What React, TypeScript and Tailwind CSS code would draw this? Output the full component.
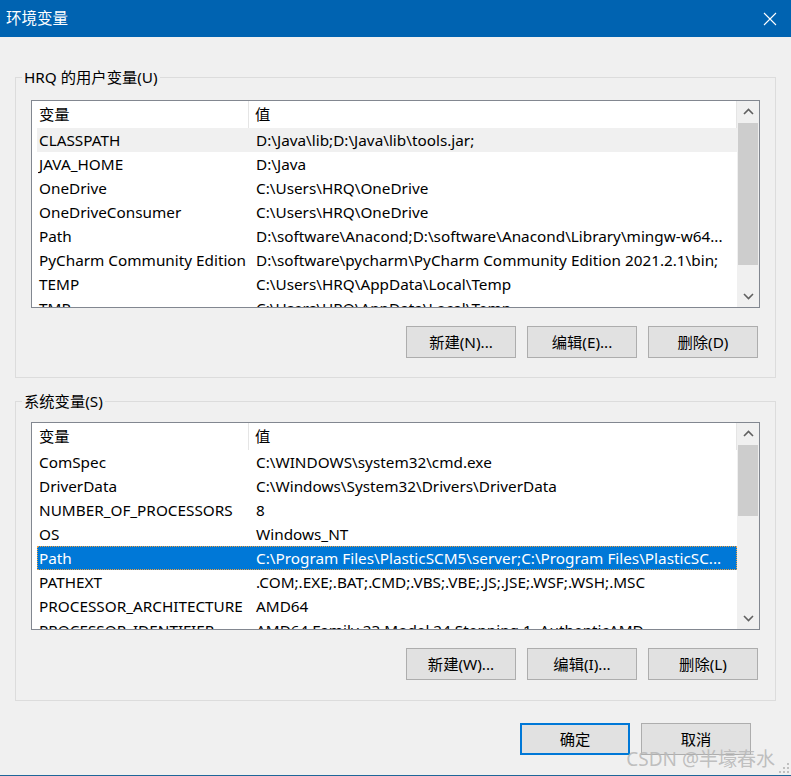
import type { ReactNode } from "react";

type Row = { name: string; value: string };

const userVars: Row[] = [
  { name: "CLASSPATH", value: "D:\\Java\\lib;D:\\Java\\lib\\tools.jar;" },
  { name: "JAVA_HOME", value: "D:\\Java" },
  { name: "OneDrive", value: "C:\\Users\\HRQ\\OneDrive" },
  { name: "OneDriveConsumer", value: "C:\\Users\\HRQ\\OneDrive" },
  { name: "Path", value: "D:\\software\\Anacond;D:\\software\\Anacond\\Library\\mingw-w64..." },
  { name: "PyCharm Community Edition", value: "D:\\software\\pycharm\\PyCharm Community Edition 2021.2.1\\bin;" },
  { name: "TEMP", value: "C:\\Users\\HRQ\\AppData\\Local\\Temp" },
  { name: "TMP", value: "C:\\Users\\HRQ\\AppData\\Local\\Temp" },
];

const sysVars: Row[] = [
  { name: "ComSpec", value: "C:\\WINDOWS\\system32\\cmd.exe" },
  { name: "DriverData", value: "C:\\Windows\\System32\\Drivers\\DriverData" },
  { name: "NUMBER_OF_PROCESSORS", value: "8" },
  { name: "OS", value: "Windows_NT" },
  { name: "Path", value: "C:\\Program Files\\PlasticSCM5\\server;C:\\Program Files\\PlasticSC..." },
  { name: "PATHEXT", value: ".COM;.EXE;.BAT;.CMD;.VBS;.VBE;.JS;.JSE;.WSF;.WSH;.MSC" },
  { name: "PROCESSOR_ARCHITECTURE", value: "AMD64" },
  { name: "PROCESSOR_IDENTIFIER", value: "AMD64 Family 23 Model 24 Stepping 1, AuthenticAMD" },
];

function Chevron({ up }: { up?: boolean }) {
  return (
    <svg width="11" height="7" viewBox="0 0 11 7" className="block">
      <polyline
        points={up ? "1,6 5.5,1.5 10,6" : "1,1 5.5,5.5 10,1"}
        fill="none"
        stroke="#606060"
        strokeWidth="1.6"
      />
    </svg>
  );
}

function VarList({
  rows,
  hover,
  selected,
  thumbTop,
  thumbHeight,
}: {
  rows: Row[];
  hover?: number;
  selected?: number;
  thumbTop: number;
  thumbHeight: number;
}) {
  return (
    <div className="flex h-[208px] w-[729px] border border-[#828790] bg-white">
      <div className="flex w-[705px] flex-col overflow-hidden">
        <div className="flex h-[27px] shrink-0 items-center">
          <div className="h-full w-[217px] border-r border-[#e5e5e5] pl-[7px] leading-[27px]">变量</div>
          <div className="h-full flex-1 border-r border-[#e5e5e5] pl-[6px] leading-[27px]">值</div>
        </div>
        <div className="ml-[5px] w-[700px]">
          {rows.map((r, i) => (
            <div
              key={r.name}
              className={
                "flex h-[24px] leading-[22px] border " +
                (i === selected
                  ? "bg-[#0078d7] text-white border-dotted border-[#f0a040]"
                  : i === hover
                  ? "bg-[#f0f0f0] border-transparent"
                  : "border-transparent")
              }
            >
              <div className="w-[212px] shrink-0 overflow-hidden whitespace-nowrap pl-[1px]">{r.name}</div>
              <div className="flex-1 overflow-hidden whitespace-nowrap pl-[6px]">{r.value}</div>
            </div>
          ))}
        </div>
      </div>
      <div className="flex w-[22px] flex-col bg-[#f0f0f0]">
        <div className="flex h-[21px] items-center justify-center">
          <Chevron up />
        </div>
        <div className="relative flex-1">
          <div
            className="absolute left-[1px] right-[1px] bg-[#cdcdcd]"
            style={{ top: thumbTop, height: thumbHeight }}
          />
        </div>
        <div className="flex h-[21px] items-center justify-center">
          <Chevron />
        </div>
      </div>
    </div>
  );
}

function Btn({ children, primary }: { children: ReactNode; primary?: boolean }) {
  return (
    <button
      className={
        "flex h-[32px] w-[110px] items-center justify-center bg-[#e1e1e1] " +
        (primary ? "border-2 border-[#0078d7]" : "border border-[#adadad]")
      }
    >
      {children}
    </button>
  );
}

function Group({ title, children }: { title: string; children: ReactNode }) {
  return (
    <fieldset className="border border-[#dcdcdc] px-0">
      <legend className="ml-[6px] px-[2px] leading-[20px]">{title}</legend>
      <div className="px-[15px]">{children}</div>
    </fieldset>
  );
}

export default function App() {
  return (
    <div className="relative h-[776px] w-[791px] overflow-hidden border-b border-[#1f6699] bg-[#f0f0f0] font-['Noto_Sans','Noto_Sans_CJK_SC',sans-serif] text-[15.3px] text-black">
      <div className="flex h-[37px] items-center justify-between bg-[#0063b1] pl-[6px] pr-[14px] text-white">
        <span className="text-[15.5px]">环境变量</span>
        <svg width="14" height="14" viewBox="0 0 14 14">
          <path d="M1 1L13 13M13 1L1 13" stroke="white" strokeWidth="1.1" />
        </svg>
      </div>

      <div className="px-[15px] pt-[30px]">
        <Group title="HRQ 的用户变量(U)">
          <div className="mt-[13px]">
            <VarList rows={userVars} hover={0} thumbTop={1} thumbHeight={142} />
          </div>
          <div className="mt-[18px] mb-[19px] flex justify-end gap-[11px] pr-[2px]">
            <Btn>新建(N)...</Btn>
            <Btn>编辑(E)...</Btn>
            <Btn>删除(D)</Btn>
          </div>
        </Group>

        <div className="mt-[13px]">
          <Group title="系统变量(S)">
            <div className="mt-[11px]">
              <VarList rows={sysVars} selected={4} thumbTop={1} thumbHeight={71} />
            </div>
            <div className="mt-[18px] mb-[20px] flex justify-end gap-[11px] pr-[2px]">
              <Btn>新建(W)...</Btn>
              <Btn>编辑(I)...</Btn>
              <Btn>删除(L)</Btn>
            </div>
          </Group>
        </div>

        <div className="mt-[22px] flex justify-end gap-[11px] pr-[25px]">
          <Btn primary>确定</Btn>
          <Btn>取消</Btn>
        </div>
      </div>

      <div className="absolute right-[16px] bottom-[4px] text-[19px] leading-[24px] text-[#b8b8b8]/90">
        CSDN @半壕春水
      </div>
      <svg className="absolute right-[1px] bottom-[1px]" width="12" height="12" viewBox="0 0 12 12">
        {[
          [9, 1], [9, 5], [5, 5], [9, 9], [5, 9], [1, 9],
        ].map(([x, y]) => (
          <rect key={`${x}-${y}`} x={x} y={y} width="2" height="2" fill="#c0c0c0" />
        ))}
      </svg>
    </div>
  );
}
